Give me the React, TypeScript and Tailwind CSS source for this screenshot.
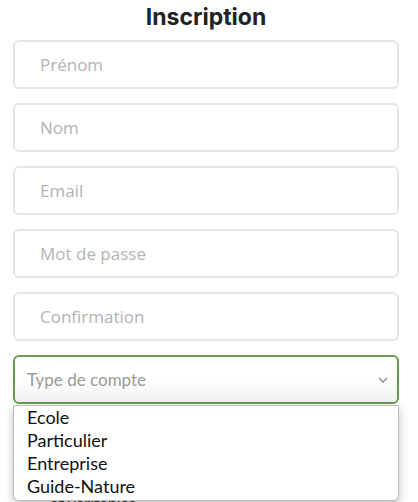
import React from "react";

const fields = ["Prénom", "Nom", "Email", "Mot de passe", "Confirmation"];
const types = ["Ecole", "Particulier", "Entreprise", "Guide-Nature"];

function Field({ placeholder }: { placeholder: string }) {
  return (
    <input
      type="text"
      placeholder={placeholder}
      className="h-[49px] w-full rounded-md border-2 border-[#e6e6e6] bg-white px-[25px] font-['Open_Sans',sans-serif] text-[17px] text-[#333] outline-none placeholder:text-[#b3b3b3]"
    />
  );
}

export default function App() {
  return (
    <div className="h-[502px] overflow-hidden bg-white">
      <div className="ml-[13px] w-[386px]">
        <h1 className="pt-[2px] text-center font-['Inter',sans-serif] text-[23px] font-bold leading-[30px] text-[#222]">
          Inscription
        </h1>
        <div className="mt-[8px] flex flex-col gap-[14px]">
          {fields.map((f) => (
            <Field key={f} placeholder={f} />
          ))}
          <div className="relative font-['Lato',sans-serif]">
            <div className="flex h-[49px] items-center justify-between rounded-md border-2 border-[#6a9a52] bg-gradient-to-b from-white via-white to-[#f1f1f1] pl-[12px] pr-[9px] text-[17px] text-[#9a9a9a]">
              <span>Type de compte</span>
              <svg width="10" height="6" viewBox="0 0 10 6" fill="none">
                <path d="M1 1l4 4 4-4" stroke="#888" strokeWidth="1.3" />
              </svg>
            </div>
            <p className="absolute left-[37px] top-[136px] text-[16px] text-[#333]">
              et véritables
            </p>
            <ul className="absolute left-0 right-0 top-[50px] z-10 rounded-b-md border border-[#bcbcbc] bg-white pb-[2px] pl-[13px] text-[18px] leading-[23px] text-[#111] shadow-[0_4px_10px_rgba(0,0,0,0.25)]">
              {types.map((t) => (
                <li key={t}>{t}</li>
              ))}
            </ul>
          </div>
        </div>
      </div>
    </div>
  );
}
